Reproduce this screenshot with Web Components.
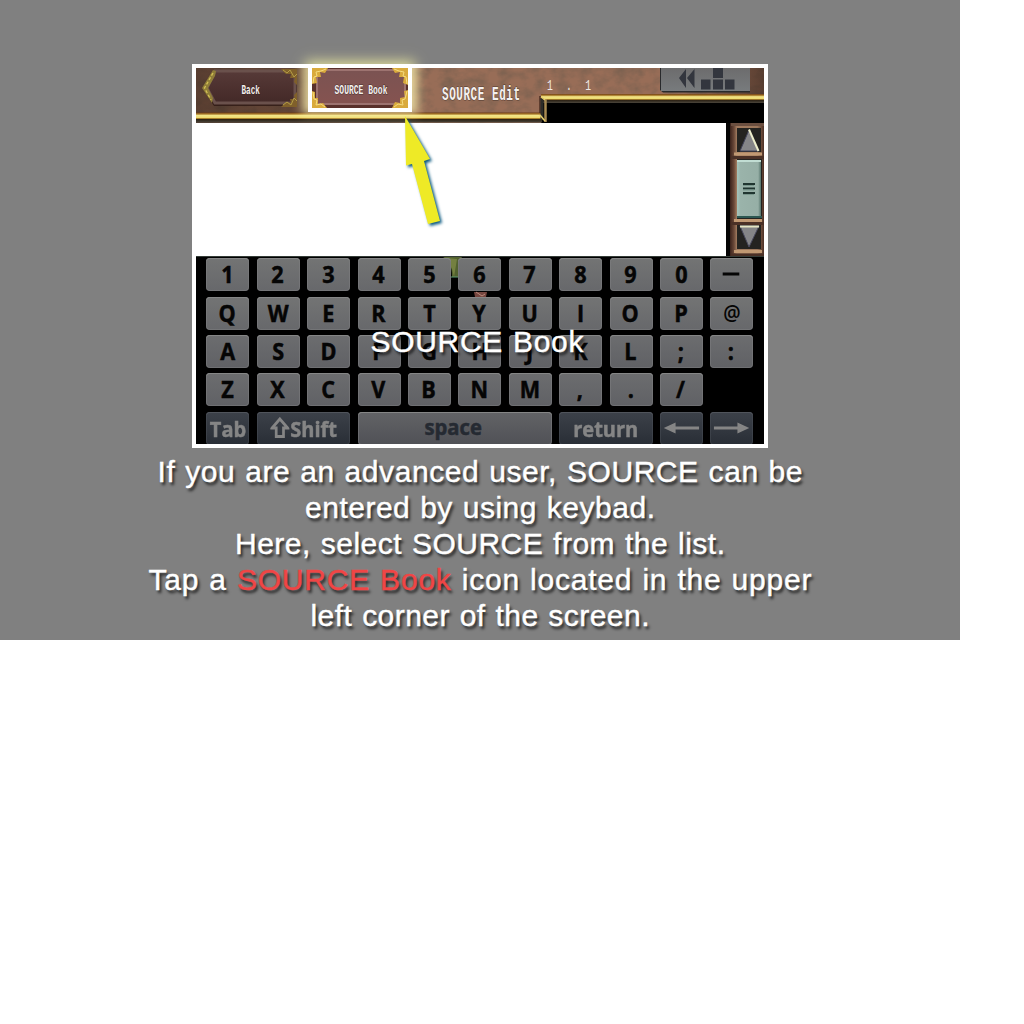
<!DOCTYPE html>
<html lang="en">
<head>
<meta charset="utf-8">
<title>SOURCE Book tutorial</title>
<style>
html,body{margin:0;background:#fff}
body{font-family:"Liberation Sans",sans-serif}
</style>
</head>
<body>
<tutorial-page></tutorial-page>
<script>
const define=(name,html,init)=>{
  const t=document.createElement('template');t.innerHTML=html;
  customElements.define(name,class extends HTMLElement{
    connectedCallback(){
      if(this.shadowRoot)return;
      this.attachShadow({mode:'open'}).append(t.content.cloneNode(true));
      if(init)init(this,this.shadowRoot);
    }
  });
};

/* One line of text tracked out to a given width. */
define('fit-line',`<style>
:host{display:flex;justify-content:center;white-space:pre;height:36px;line-height:36px;font-size:30px;color:#fff;
word-spacing:1px;text-shadow:2px 3px 3px rgba(0,0,0,.75)}
span{display:block;flex:none;-webkit-text-stroke:.4px}
</style><span><slot></slot></span>`,(el,r)=>{
  const s=r.querySelector('span'),w=+el.getAttribute('width'),n=el.textContent.length;
  const ls=(w-s.getBoundingClientRect().width)/(n-1);
  s.style.letterSpacing=ls+'px';s.style.marginRight=-ls+'px';
});

define('key-cap',`<style>
:host{display:flex;align-items:center;justify-content:center;box-sizing:border-box;border-radius:4px;
background:linear-gradient(#737474,#67686b);box-shadow:inset 0 1px #858686,inset 0 0 0 1px rgba(130,130,132,.45);
color:#050505;font:bold 24px/33px "Open Sans","Noto Sans",sans-serif;height:33px;overflow:hidden}
:host([row="3"]),:host([row="4"]){background:linear-gradient(#6c6d6f,#606165)}
:host([wide]){grid-column:span 2}
:host([space]){grid-column:span 4;color:#252a32;font-size:22px;line-height:29px;background:linear-gradient(#626366,#505156)}
:host([dark]){background:linear-gradient(#3c4149,#292e36);box-shadow:inset 0 1px #50545b,inset 0 0 0 1px rgba(80,84,92,.4);color:#858585;font-size:22px}
span{display:flex;align-items:center;gap:1px;transform:translate(-.5px,-1px) scaleX(.9);-webkit-text-stroke:.5px}
:host([light]){font-size:22px}
:host([light]) span{font-weight:600;transform:translateY(-1px) scaleX(.88);-webkit-text-stroke:0}
:host([dark]) span{transform:translateY(0) scaleX(.91)}
:host([space]) span{transform:translate(-1px,-2px) scaleX(.92)}
</style><span><slot></slot></span>`);

define('key-board',`<style>
:host{display:grid;grid-template-columns:repeat(11,43px);grid-auto-rows:33px;column-gap:7.4px;row-gap:5.4px;
box-sizing:border-box;height:188px;padding:1.2px 0 0 10.400px;background:#000;overflow:hidden;border-top:1px solid #343c37;position:relative}
.bits{position:absolute;left:0;top:0}
key-cap{position:relative}
svg{display:block;flex:none}
</style><svg class="bits" width="568" height="60"><path d="M247 0h19q-4 4-3 20h-7q0-16-9-20z" fill="#52612f"/><path d="M251 1l10 1-3 18-2-8z" fill="#748040"/><path d="M254 20h8" stroke="#5e9b74"/><path d="M278 35h13l-1 5h-11z" fill="#76463f"/><path d="M280 35l6 4 3-2" stroke="#b98a7b" fill="none"/></svg>`,(el,r)=>{
  const rows=['1234567890—','QWERTYUIOP@','ASDFGHJKL;:','ZXCVBNM,./'];
  const add=(html,attrs)=>{const k=document.createElement('key-cap');for(const a in attrs)k.setAttribute(a,attrs[a]);k.innerHTML=html;r.append(k);return k};
  rows.forEach((s,i)=>{[...s].forEach(c=>{
    if(c==='—')add('<svg width="19" height="4"><path d="M0 2h19" stroke="#050505" stroke-width="3"/></svg>',{row:i+1});
    else add(c,c==='@'?{row:i+1,light:''}:{row:i+1});
  });});
  const gap=document.createElement('div');r.append(gap);
  add('Tab',{dark:''});
  add('<svg width="21" height="22" viewBox="0 0 21 22"><path d="M10.500 2L19 11H14.500V19.500H6.500V11H2Z" fill="none" stroke="#858585" stroke-width="3"/></svg>Shift',{dark:'',wide:''});
  add('space',{space:''});
  add('return',{dark:'',wide:''});
  add('<svg width="39" height="12" viewBox="0 0 36 12" preserveAspectRatio="none"><path d="M0 6L12 0.500V4.500H36V7.500H12V11.500Z" fill="#858585"/></svg>',{dark:''});
  add('<svg width="39" height="12" viewBox="0 0 36 12" preserveAspectRatio="none"><path d="M36 6L24 0.500V4.500H0V7.500H24V11.500Z" fill="#858585"/></svg>',{dark:''});
});

/* Header artwork; user units equal page pixels offset by (196,68). */
define('game-header',`<style>:host{display:block;height:55px}svg{display:block}
text{font-family:"Liberation Mono",monospace;font-weight:bold;white-space:pre}</style>
<svg width="568" height="55" viewBox="196 68 568 55">
<defs>
<filter id="tx" x="0" y="0" width="100%" height="100%"><feTurbulence type="fractalNoise" baseFrequency=".07 .09" numOctaves="4" seed="8"/><feColorMatrix values="0 0 0 0 .2  0 0 0 0 .12  0 0 0 0 .08  1.8 0 0 0 -.66"/></filter>
<linearGradient id="g" x1="0" y1="0" x2="0" y2="1"><stop offset="0" stop-color="#6e3c14"/><stop offset=".15" stop-color="#a97b2c"/><stop offset=".3" stop-color="#f2e487"/><stop offset=".5" stop-color="#efdc72"/><stop offset=".6" stop-color="#a87f2a"/><stop offset=".7" stop-color="#2c2215"/><stop offset="1" stop-color="#4c463c"/></linearGradient>
<linearGradient id="d" x1="0" y1="0" x2="1" y2="0"><stop offset="0" stop-color="#1c100b" stop-opacity=".5"/><stop offset=".2" stop-color="#1c100b" stop-opacity=".4"/><stop offset=".4" stop-color="#1c100b" stop-opacity="0"/><stop offset=".85" stop-color="#1c100b" stop-opacity="0"/><stop offset="1" stop-color="#1c100b" stop-opacity=".5"/></linearGradient>
<linearGradient id="b1" x1="0" y1="0" x2="0" y2="1"><stop offset="0" stop-color="#573a38"/><stop offset="1" stop-color="#432927"/></linearGradient>
<linearGradient id="b2" x1="0" y1="0" x2="0" y2="1"><stop offset="0" stop-color="#7b5352"/><stop offset="1" stop-color="#855350"/></linearGradient>
<linearGradient id="k" x1="0" y1="0" x2="0" y2="1"><stop offset="0" stop-color="#6c6c6d"/><stop offset="1" stop-color="#787b7d"/></linearGradient>
<filter id="gl" x="-30%" y="-50%" width="160%" height="200%"><feGaussianBlur stdDeviation="5"/></filter>
</defs>
<rect x="196" y="68" width="568" height="55" fill="#986d57"/>
<rect x="196" y="68" width="568" height="55" filter="url(#tx)"/>
<rect x="196" y="68" width="568" height="55" fill="url(#d)"/>
<path d="M541 102H764V123H541Z" fill="#000"/>
<rect x="196" y="112.500" width="346" height="10" fill="url(#g)"/>
<rect x="541" y="94" width="223" height="9" fill="url(#g)"/>
<path d="M540 113V96" stroke="#4a2c20" stroke-width="1.500"/><path d="M542 120V98" stroke="#2d2c28" stroke-width="3"/><path d="M545.500 122V99" stroke="#a98b53" stroke-width="2.500"/><path d="M541 97l4 3M540 115l5 6" stroke="#e4cc6a" stroke-width="1.500"/>
<rect x="302" y="60" width="116" height="54" fill="#fff5b0" filter="url(#gl)" opacity=".75"/>
<!-- Back button -->
<path d="M214 70H297V106H214L203 89Z" fill="#2b1612" opacity=".75"/>
<path d="M215 71H295V103H215L207 88Z" fill="url(#b1)" stroke="#6a514c" stroke-width="3"/>
<path d="M213 70L202 88L212 103L213 98L208 88L215 76L216 71Z" fill="#8f7d38"/><path d="M213 73L204.500 88L211 100" fill="none" stroke="#d4c257" stroke-width="1.300" stroke-dasharray="3 2"/>
<path d="M281 69H297V85L294 82L295 78L290 78L291 74L286 74ZM281 107H297V92L294 95L295 99L290 99L291 103L286 102Z" fill="#80602a"/><path d="M283 70l4 3 3-3 4 7 3-3M283 105l4-3 4 3 3-7 3 3" stroke="#b39c46" fill="none"/>
<!-- SOURCE Book button -->
<rect x="312" y="68" width="96" height="40" fill="#59302b"/>
<rect x="317" y="70" width="88" height="34" fill="url(#b2)" stroke="#9d7370" stroke-width="2"/>
<path d="M312 68H328L325 73L320 72L321 77L316 77L317 83L312 84ZM312 108H327L323 103L318 104L318 98L315 98L315 92L312 91ZM408 68H392L395 73L400 72L399 77L404 77L403 83L408 85ZM408 108H392L395 102L400 103L400 98L405 97L404 91L408 90Z" fill="#d9aa3c"/>
<path d="M313 83l1-6 3-1-1-4 5-1 5-2M313 92l1 7 3 1-1 5 5-1 4 3M407 84l-1-7-3-1 1-4-5-1-5-2M407 91l-2 8-3 1 1 5-5-1-4 3" stroke="#f5dc80" stroke-width="1" fill="none"/>
<path d="M310 66V110H410V66" fill="none" stroke="#fff" stroke-width="4"/>
<g fill="#f4f0ee" stroke="#2d1c19" stroke-opacity=".7" stroke-width="1" paint-order="stroke">
<text x="241.500" y="94" font-size="12.500" textLength="18.500" lengthAdjust="spacingAndGlyphs">Back</text>
<text x="334.500" y="94" font-size="12.500" textLength="53" lengthAdjust="spacingAndGlyphs">SOURCE Book</text>
<text transform="translate(442 100) scale(.55 1)" font-size="20" textLength="142" lengthAdjust="spacing">SOURCE Edit</text></g>
<text transform="translate(547 90) scale(.7 1)" font-size="14" fill="#efe9e6" style="font-weight:400" textLength="63" lengthAdjust="spacing">1 . 1</text>
<!-- Rewind and block controls -->
<path d="M660 68H750V92.500H663L660 90Z" fill="#292a2c"/><path d="M661 68H750V91H661Z" fill="url(#k)"/>
<g fill="#33363e"><path d="M679 78L686 69V88ZM687 78L694.500 69V88Z"/><path d="M713 68h10v10h-10zM701 79.500h9.500v10H701zM713 79.500h10v10h-10zM725 79.500h9.500v10H725z"/></g>
</svg>`);

define('scroll-rail',`<style>:host{display:block;width:38px}svg{display:block}</style>
<svg width="38" height="133" viewBox="726 123 38 133">
<defs><linearGradient id="t" x1="0" y1="0" x2="1" y2="0"><stop offset="0" stop-color="#a5c5bb"/><stop offset=".15" stop-color="#9ab3aa"/><stop offset=".88" stop-color="#96afa6"/><stop offset="1" stop-color="#55736b"/></linearGradient>
<linearGradient id="w" x1="0" y1="0" x2="1" y2="0"><stop offset="0" stop-color="#3a221b"/><stop offset=".12" stop-color="#6b4939"/><stop offset=".2" stop-color="#a07a5e"/><stop offset=".8" stop-color="#9c775b"/><stop offset="1" stop-color="#4c3026"/></linearGradient></defs>
<path d="M726 123H764V256H726Z" fill="#050404"/><path d="M730 122H764V256H730Z" fill="url(#w)"/><path d="M731 123h33v3h-33z" fill="#6b4f40"/>
<path d="M734 154h28M734 220.500h28M734 251.500h28" stroke="#c19973" stroke-width="3"/><path d="M731 157.500h33M731 223.500h33M731 255h33" stroke="#4a3026" stroke-width="3"/>
<path d="M737 128h24v24h-24zM737 159h25v60h-25zM737 225h24v24h-24z" fill="#242320"/>
<path d="M749 130L758.500 151H740Z" fill="#858587" stroke="#43445a"/><path d="M749 129.500L758.500 151" stroke="#eeeecb" stroke-width="2"/>
<path d="M749 247L740 226H759Z" fill="#858587" stroke="#4a4a5e"/><path d="M740 226.500H759" stroke="#e5e5c3" stroke-width="2"/>
<rect x="737" y="160" width="24" height="57" fill="url(#t)"/><path d="M737 161h24" stroke="#c1ddd3" stroke-width="2"/><path d="M737 217h25" stroke="#2c5751" stroke-width="2"/>
<path d="M743 184h12M743 188.500h12M743 193h12" stroke="#203530" stroke-width="1.800"/><path d="M743 185.500h11M743 190h11M743 194.500h11" stroke="#79968c"/>
</svg>`);

define('game-screen',`<style>
:host{display:flex;flex-direction:column;width:568px;height:376px;border:4px solid #fff;position:relative;background:#000}
.mid{display:flex;height:133px}.page{flex:1;background:#fff}
.glow{position:absolute;left:114px;top:-2px;width:100px;height:46px;box-shadow:0 0 12px 5px rgba(255,252,165,.75);clip-path:inset(-24px -24px 44px -24px)}
.top{position:absolute;left:-4px;top:-4px;width:576px;height:4px;background:#fff}
.arrow{position:absolute;left:200px;top:46px;filter:drop-shadow(2px 2px 1.500px #07577f)}
.label{position:absolute;left:0;right:6px;top:256px}
</style>
<game-header></game-header>
<div class="mid"><div class="page"></div><scroll-rail></scroll-rail></div>
<key-board></key-board>
<div class="glow"></div><div class="top"></div>
<svg class="arrow" width="54" height="114" viewBox="396 114 54 114"><path d="M405 116L430 159L424 161L440 221L428 224L412 164L406 165.500Z" fill="#eeea26"/></svg>
<fit-line class="label" width="213">SOURCE Book</fit-line>`);

define('tutorial-page',`<style>
:host{display:flex;flex-direction:column;align-items:center;box-sizing:border-box;width:960px;height:640px;padding-top:64px;background:#808080}
.copy{margin-top:6px;align-self:stretch}
b{font-weight:400;color:#f04545}
</style>
<game-screen></game-screen>
<div class="copy">
<fit-line width="645">If you are an advanced user, SOURCE can be</fit-line>
<fit-line width="350">entered by using keybad.</fit-line>
<fit-line width="490">Here, select SOURCE from the list.</fit-line>
<fit-line width="663">Tap a <b>SOURCE Book</b> icon located in the upper</fit-line>
<fit-line width="339">left corner of the screen.</fit-line>
</div>`);
</script>
</body>
</html>
